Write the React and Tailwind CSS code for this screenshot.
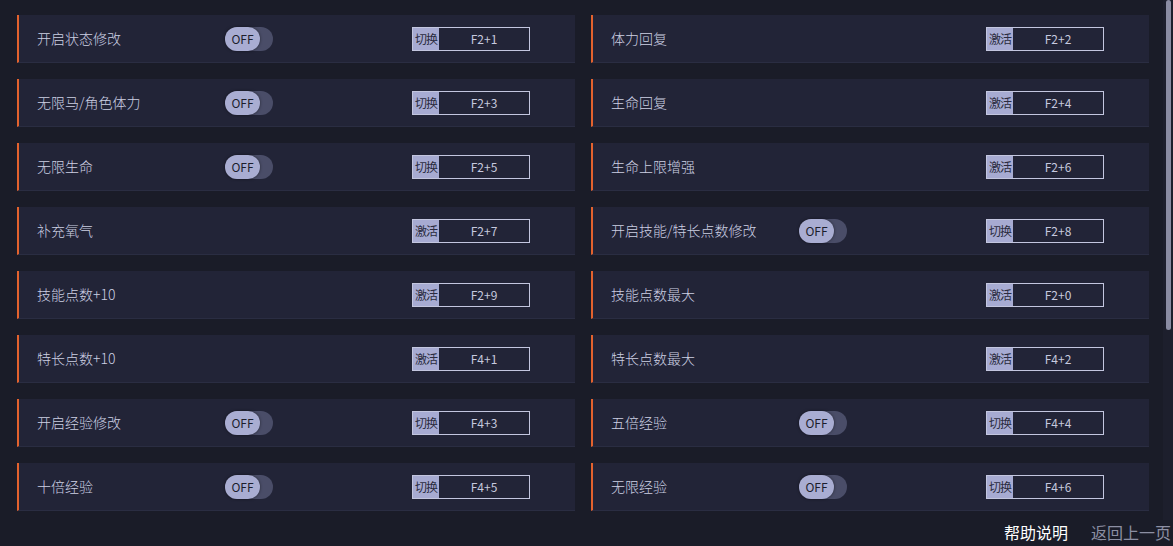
import React from 'react';

const ROWS = [
  [
    { name: '开启状态修改', toggle: true, mode: '切换', key: 'F2+1' },
    { name: '体力回复', toggle: false, mode: '激活', key: 'F2+2' },
  ],
  [
    { name: '无限马/角色体力', toggle: true, mode: '切换', key: 'F2+3' },
    { name: '生命回复', toggle: false, mode: '激活', key: 'F2+4' },
  ],
  [
    { name: '无限生命', toggle: true, mode: '切换', key: 'F2+5' },
    { name: '生命上限增强', toggle: false, mode: '激活', key: 'F2+6' },
  ],
  [
    { name: '补充氧气', toggle: false, mode: '激活', key: 'F2+7' },
    { name: '开启技能/特长点数修改', toggle: true, mode: '切换', key: 'F2+8' },
  ],
  [
    { name: '技能点数+10', toggle: false, mode: '激活', key: 'F2+9' },
    { name: '技能点数最大', toggle: false, mode: '激活', key: 'F2+0' },
  ],
  [
    { name: '特长点数+10', toggle: false, mode: '激活', key: 'F4+1' },
    { name: '特长点数最大', toggle: false, mode: '激活', key: 'F4+2' },
  ],
  [
    { name: '开启经验修改', toggle: true, mode: '切换', key: 'F4+3' },
    { name: '五倍经验', toggle: true, mode: '切换', key: 'F4+4' },
  ],
  [
    { name: '十倍经验', toggle: true, mode: '切换', key: 'F4+5' },
    { name: '无限经验', toggle: true, mode: '切换', key: 'F4+6' },
  ],
];

function Toggle() {
  return (
    <div className="flex h-[24px] w-[48px] items-center rounded-full bg-[#4a4d68]">
      <div className="flex h-[24px] w-[35px] items-center justify-center rounded-full bg-[#a9add2] text-[12px] text-[#1c1e2d] shadow-[0_0_3px_rgba(0,0,0,0.5)]">
        OFF
      </div>
    </div>
  );
}

function HotKey({ mode, hotkey }) {
  return (
    <div className="flex h-[24px] w-[118px] items-stretch border border-[#c3c6df]">
      <div className="flex w-[26px] items-center justify-center bg-[#a7abd2] text-[12px] tracking-[-1px] text-[#2a2c40]">
        {mode}
      </div>
      <div className="flex flex-1 items-center justify-center text-[12px] text-[#c6c9de]">
        {hotkey}
      </div>
    </div>
  );
}

function Card({ item }) {
  return (
    <div className="flex h-[48px] items-center border-l-2 border-[#e3622e] border-b border-b-[#2a2d42] bg-[#222437]">
      <div className="w-[206px] pl-[18px] text-[14px] font-light text-[#cdd0e4]">{item.name}</div>
      <div className="w-[187px]">{item.toggle && <Toggle />}</div>
      <HotKey mode={item.mode} hotkey={item.key} />
    </div>
  );
}

export default function App() {
  return (
    <div
      className="relative h-[546px] w-[1173px] overflow-hidden bg-[#1a1c28]"
      style={{ fontFamily: '"Microsoft YaHei", "Noto Sans CJK SC", "Noto Sans", sans-serif' }}
    >
      <div className="grid w-[1149px] grid-cols-2 gap-4 pl-[17px] pt-[15px]">
        {ROWS.flat().map((item) => (
          <Card key={item.key} item={item} />
        ))}
      </div>

      <div className="mt-[9px] flex h-[24px] items-center justify-end gap-[23px] text-[16px] leading-[24px]">
        <span className="text-white">帮助说明</span>
        <span className="mr-[2px] text-[#8c8fa3]">返回上一页</span>
      </div>

      {/* scrollbar */}
      <div className="absolute right-0 top-0 h-[520px] w-[10px] bg-[#1d1f2d]">
        <div className="ml-[3px] h-[330px] w-[5px] rounded-sm bg-[#8a8ca3]"></div>
      </div>
    </div>
  );
}
